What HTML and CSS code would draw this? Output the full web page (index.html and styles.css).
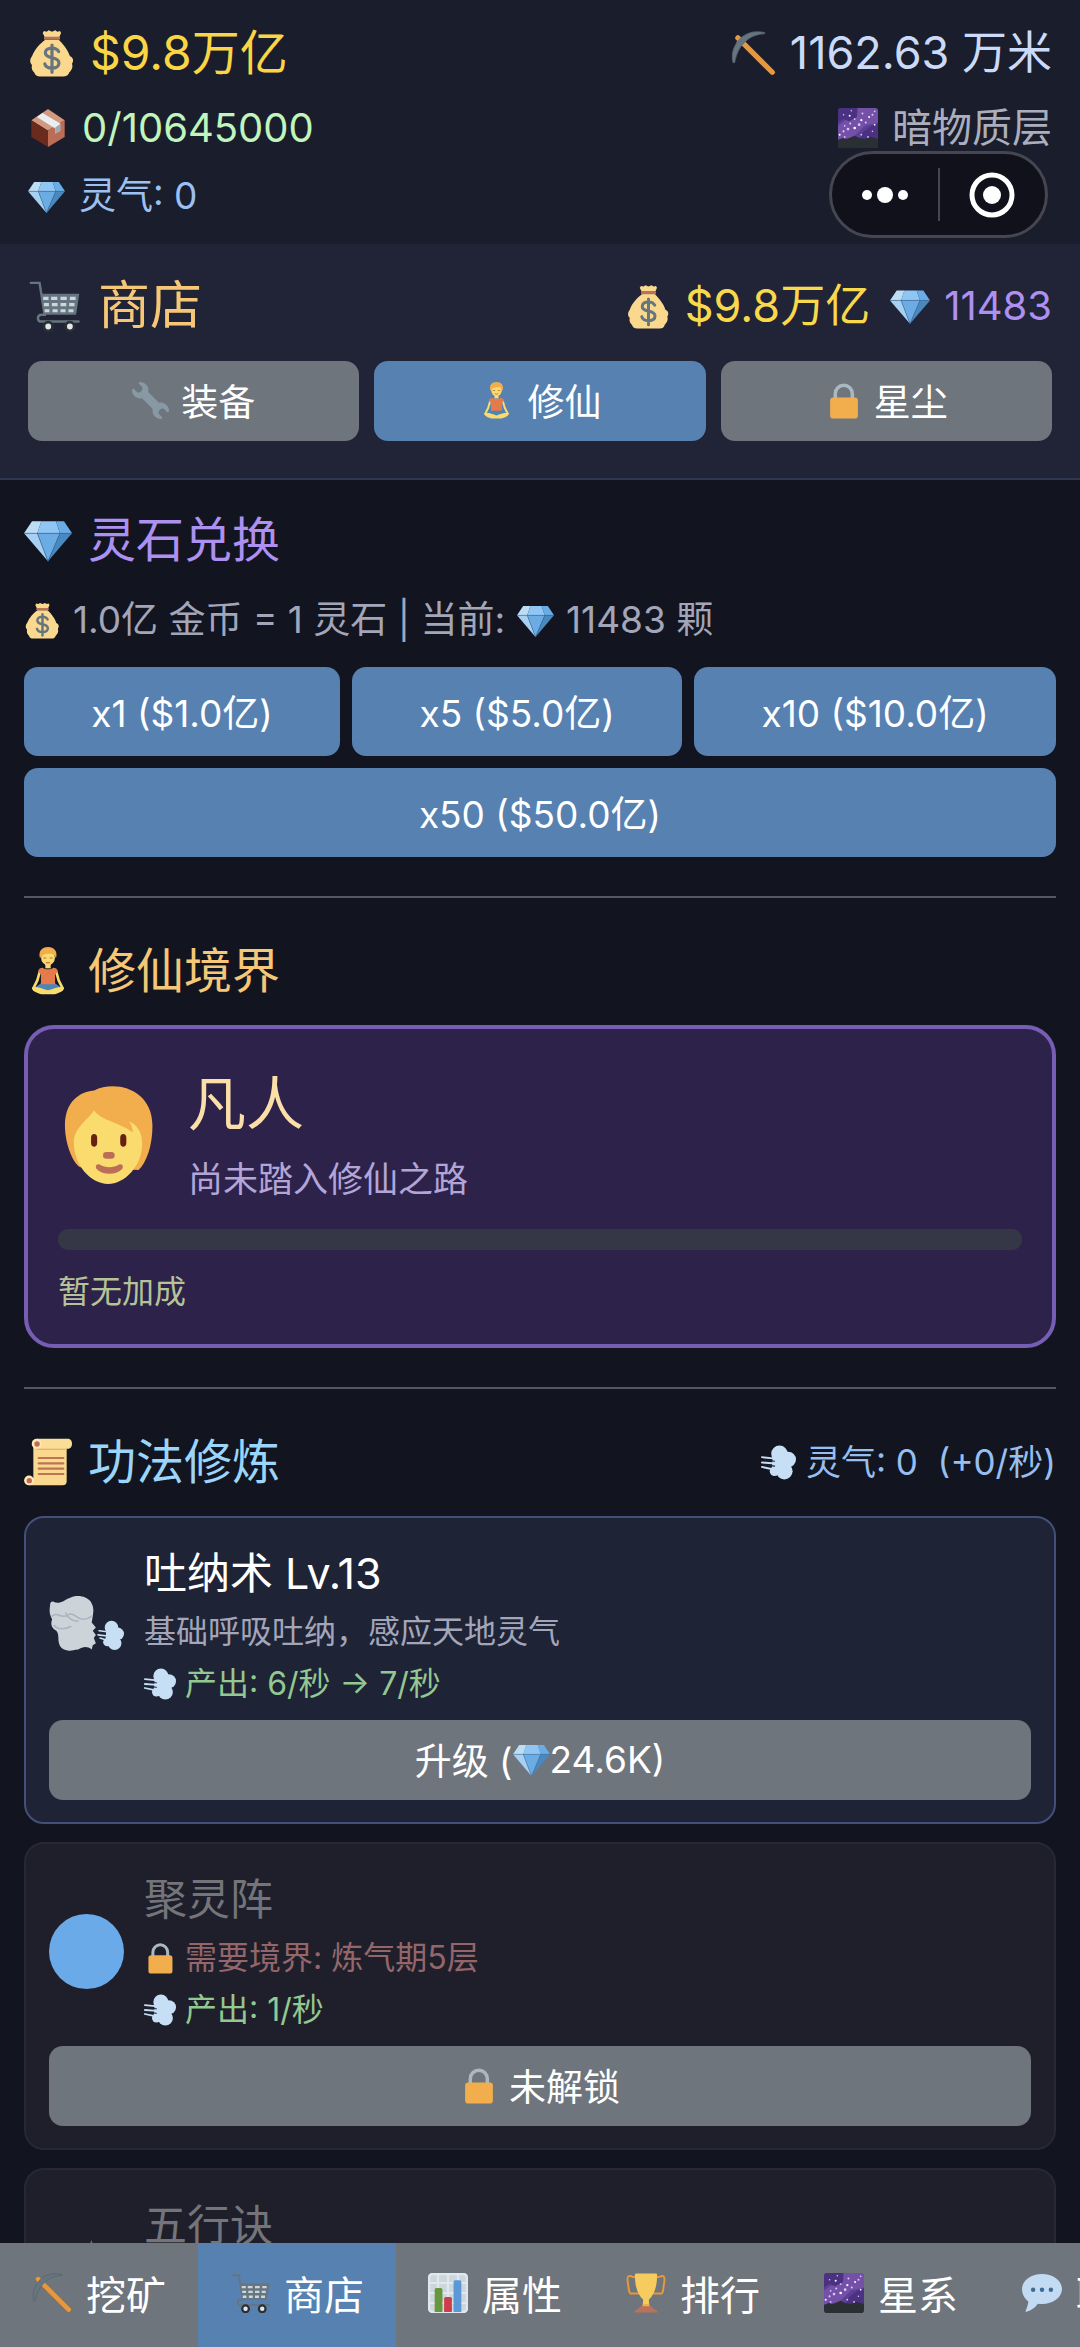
FILE: index.html
```html
<!DOCTYPE html>
<html lang="zh-CN">
<head>
  <meta charset="UTF-8" />
  <meta name="viewport" content="width=device-width, initial-scale=1.0" />
  <title>商店</title>
  <link rel="stylesheet" href="styles.css">
</head>
<body>
  <!-- Icon sprite -->
  <svg class="sprite" aria-hidden="true">
    <symbol id="i-bag" viewBox="0 0 36 36">
      <path fill="#fad98f" d="M12 1.5l2 .5 1.500-1 2.500 1 2.500-1L22 2l2-.5.8 1.500L23.500 6h-11L11 3z"/>
      <path fill="#fad98f" d="M13 8h10c3 3 7 7.500 8.500 12.500C34 21.500 34.500 24 33 26c1 3-.5 5-2 6.500-.6 2-1.800 3.100-4 3.100H9c-2.200 0-3.600-.8-4.200-2.800C3 31 2.400 29.500 3 27c-2-2-1.500-4.500 0-6.500C5 15 9 11 13 8z"/>
      <path fill="#b8735a" d="M12.500 5.800h11c.8 0 .8 2.300 0 2.300h-11c-.8 0-.8-2.300 0-2.300z"/>
      <path fill="none" stroke="#67757f" stroke-width="2.400" stroke-linecap="round" stroke-linejoin="round" d="M23 17c-1-2.200-3-2.700-5-2.700-3 0-5 1.300-5 3.600 0 2.500 2.500 3.200 5 3.700 2.800.6 5.200 1.300 5.200 4 0 2.400-2.200 3.700-5.200 3.700-2.600 0-4.800-.8-5.400-3.200M18 12v20.500"/>
    </symbol>
    <symbol id="i-box" viewBox="0 0 36 36">
      <path fill="#d3997f" d="M18 1l15 10-15 9.500L3 11z"/>
      <path fill="#6a2a1e" d="M3 11l15 9.500V35L3 26z"/>
      <path fill="#bb6d56" d="M33 11l-15 9.500V35l15-9z"/>
      <path fill="#e8eef2" d="M13 4.500L8 8l16.500 10.500v4.500l4.500-2.500V14z"/>
      <path fill="#99aab5" d="M24.500 17.500L29 14.500v6l-4.500 2.500z"/>
    </symbol>
    <symbol id="i-gem" viewBox="0 0 36 36">
      <path fill="#bdddf4" d="M6 4h7l-3 9H0z"/>
      <path fill="#8fc6f4" d="M13 4h11l3 9H10z"/>
      <path fill="#69ade6" d="M24 4h6l6 9h-9z"/>
      <path fill="#a8d0f2" d="M0 13h10l8 21z"/>
      <path fill="#6cace4" d="M10 13h17l-9 21z"/>
      <path fill="#4a88c0" d="M27 13h9L18 34z"/>
      <path fill="none" stroke="#3b6d99" stroke-width=".5" d="M0 13h36M10 13l8 21 9-21"/>
    </symbol>
    <symbol id="i-pick" viewBox="0 0 36 36">
      <path fill="none" stroke="#e8973a" stroke-width="4.200" stroke-linecap="round" d="M5.500 5.500L33 33"/>
      <path fill="#66757f" stroke="#56626b" stroke-width=".6" d="M1.500 25C-1.500 13 9-3 27 1.200c.6.400.3 1-.5 1C15 3 6 10 3 25c-.2.700-1.200.7-1.500 0z"/>
      <path fill="#66757f" d="M4 9l6-5 3 3-6 6z"/>
    </symbol>
    <symbol id="i-galaxy" viewBox="0 0 36 36">
      <rect width="36" height="36" rx="3" fill="#5c3f97"/>
      <path fill="#7450a8" d="M18 0h15a3 3 0 0 1 3 3v10L24 16 12 28H0V16l8-6 9-2z"/>
      <path fill="#4a3181" d="M0 3a3 3 0 0 1 3-3h14v8l-7 4-5-2-5 3zM22 22l8-6 6-2v14H20z"/>
      <path fill="#292f33" d="M0 29l4-2 3 1 3-1 5-2 4 2 5 1 5-2 4 1 3 1v5a3 3 0 0 1-3 3H3a3 3 0 0 1-3-3z"/>
      <g fill="#fff">
        <circle cx="15" cy="18" r="1.200"/><circle cx="21" cy="11" r="1"/><circle cx="28" cy="8" r=".9"/><circle cx="10.500" cy="7" r=".9"/><circle cx="1.500" cy="24" r=".9"/><circle cx="33" cy="15" r=".8"/>
      </g>
      <g fill="#dcc8f6">
        <circle cx="19" cy="15" r="1.200"/><circle cx="9" cy="19" r="1.200"/><circle cx="5" cy="21" r="1"/><circle cx="11" cy="14" r=".9"/><circle cx="15" cy="10" r=".8"/><circle cx="22" cy="5" r=".9"/><circle cx="31" cy="6" r=".9"/><circle cx="33" cy="3" r=".8"/><circle cx="25" cy="13" r=".9"/><circle cx="12" cy="2.500" r=".7"/><circle cx="5" cy="6" r=".7"/><circle cx="21" cy="24" r=".8"/><circle cx="31" cy="21" r=".7"/><circle cx="27" cy="26" r=".8"/><circle cx="6" cy="26" r=".8"/><circle cx="6" cy="16" r=".8"/>
      </g>
    </symbol>
    <symbol id="i-cart" viewBox="0 0 36 36">
      <path fill="none" stroke="#66757f" stroke-width="1.700" stroke-linecap="round" d="M2 2h6l3.500 22H9.500c-3.500 0-3.500 4.800 0 4.800H35"/>
      <path fill="#66757f" d="M9 9.500h26.500L33.300 24H11z"/>
      <path stroke="#ccd6dd" stroke-width="2.200" d="M10.500 12.700h3.700M16 12.700h4.300M22.500 12.700h4.300M29 12.700h4M11 17h3.500M16.500 17h4M22.500 17h4M28.500 17h3.700M11.500 21.300h3.300M17 21.300h3.500M22.500 21.300h3.500M28 21.300h3.500"/>
      <g fill="#e1e8ed" stroke="#292f33" stroke-width="2"><circle cx="14" cy="32.200" r="3"/><circle cx="29" cy="32.200" r="3"/></g>
    </symbol>
    <symbol id="i-wrench" viewBox="0 0 36 36">
      <path fill="#8899a6" d="M27.989 19.977c-.622 0-1.225.078-1.806.213L15.811 9.818c.134-.581.212-1.184.212-1.806C16.023 3.587 12.436 0 8.012 0 7.110 0 5.910.916 6.909 1.915l2.997 2.997s.999 1.998-.999 3.995-3.996.998-3.996.998L1.915 6.908C.916 5.909 0 7.105 0 8.012c0 4.425 3.587 8.012 8.012 8.012.622 0 1.225-.078 1.806-.212l10.371 10.371c-.135.581-.213 1.184-.213 1.806 0 4.425 3.588 8.011 8.012 8.011.901 0 2.101-.916 1.102-1.915l-2.997-2.997s-.999-1.998.999-3.995 3.995-.999 3.995-.999l2.997 2.997c1 .999 1.916-.196 1.916-1.102 0-4.425-3.587-8.012-8.011-8.012z"/>
    </symbol>
    <symbol id="i-lotus" viewBox="0 0 36 36">
      <path fill="#fadb6e" d="M16 11h4v5h-4z"/>
      <path fill="none" stroke="#fadb6e" stroke-width="2" stroke-linecap="round" stroke-linejoin="round" d="M12 18l-2 7L7 31M24 18l2 7L29 31"/>
      <path fill="#4b86b8" d="M13 27h10l5 3.500-5 2.500H13l-5-2.500z"/>
      <path fill="#fadb6e" d="M6.500 30c4-.5 8 1.500 11.500 2.500 3.500-1 7.500-3 11.500-2.500 1.500 3-3 4.300-6.500 5.500H13c-3.500-1.200-8-2.500-6.500-5.500z"/>
      <path fill="#e57a4a" d="M14 15.500c2 1.500 6 1.500 8 0 2 0 3.300 1 3.300 3l-2 2V28H12.700v-7.500l-2-2c0-2 1.300-3 3.300-3z"/>
      <ellipse cx="18" cy="7.800" rx="5.200" ry="6" fill="#fadb6e"/>
      <path fill="#f2ae4d" d="M12 8.500C10.500 3 13.500 0 18 0s7.500 3 6 8.500c-1-3-2-3.500-4.500-3.500S13.500 5 12 8.500z"/>
      <path fill="none" stroke="#c1694f" stroke-width=".8" d="M14.500 8.300h2.200M19.300 8.300h2.200M16.300 11.300q1.700 1.200 3.400 0"/>
    </symbol>
    <symbol id="i-lock" viewBox="0 0 36 36">
      <path fill="none" stroke="#aab8c2" stroke-width="3.400" d="M10 17v-5.500a8.300 8.300 0 0 1 16.600 0V17"/>
      <rect x="5" y="15" width="27" height="20.500" rx="3" fill="#f2ae4d"/>
    </symbol>
    <symbol id="i-face" viewBox="0 0 36 36">
      <path fill="#f2ae4d" d="M13 2.300C21-1.500 34 2 34 15c0 7-2 13-5 16L8 30c-3-2-5.500-9-5.500-15C2.500 8 6 3 13 2.300z"/>
      <path fill="#fadb6e" d="M13 9.500c3 4 9 4 14 8-.2-1.800-.6-3-1.500-4 3 1 4.800 4 4.800 8C30.300 29.500 24 36 18 36S5.700 29.500 5.700 21c0-5 4.300-7.500 7.300-11.500z"/>
      <path fill="#662113" d="M13 18c.7 0 1.100.6 1.100 1.400v1.800c0 1.800-2.200 1.800-2.200 0v-1.800c0-.8.4-1.400 1.100-1.400zM23.500 18c.7 0 1.100.6 1.100 1.400v1.800c0 1.800-2.200 1.800-2.200 0v-1.800c0-.8.4-1.400 1.100-1.400z"/>
      <rect x="16.200" y="24.500" width="4.200" height="2.400" rx="1.200" fill="#bb6d56"/>
      <path fill="#bb6d56" d="M15 29c2 1.300 5 1.300 7 0 1.200-.5 1.800.8 1 1.700-2.200 2.200-6.800 2.200-9 0-.8-.9-.2-2.200 1-1.700z"/>
    </symbol>
    <symbol id="i-scroll" viewBox="0 0 36 36">
      <path fill="#fad98f" d="M7 3h25v29.500a3 3 0 0 1-3 3H4V30h3z"/>
      <path fill="#fadd98" d="M9.500.5H33c4 0 4 7.500 0 7.500H9.500z"/>
      <path fill="#e8b46a" d="M9 8h23v1H9z"/>
      <circle cx="9.500" cy="4.300" r="3.700" fill="#ffe8b6"/><circle cx="9.800" cy="4.500" r="2" fill="#bb6d56"/>
      <circle cx="3.800" cy="31.800" r="3.700" fill="#ffe8b6"/><circle cx="4" cy="32" r="2" fill="#bb6d56"/>
      <path stroke="#bb7555" stroke-width="1.600" stroke-linecap="round" d="M11 15h18.500M11 19h18.500M11 23h18.500M11 27h18.500"/>
    </symbol>
    <symbol id="i-wind" viewBox="0 0 36 36">
      <g fill="#c6dff5"><circle cx="19" cy="9" r="8.500"/><circle cx="28" cy="15" r="8"/><circle cx="24" cy="27" r="8.500"/><circle cx="14" cy="27" r="5"/><path d="M12 12h18v16H11z"/></g>
      <path fill="none" stroke="#c6dff5" stroke-width="2" stroke-linecap="round" d="M1 12.500l14 1.500M1 18l14 1M1 22.500L12 25"/>
      <path fill="none" stroke="#1f2336" stroke-width="1.100" stroke-linecap="round" d="M4 15.500l10 1.200M4 20.500l10 1.200"/>
    </symbol>
    <symbol id="i-breath" viewBox="0 0 72 72">
      <path fill="#ccd4da" d="M1 17c0-4 2-5 5-3 6 1 9-3 15-5 7-3 15-1 19 4 3 5 3 9 2 14l-1 6 4 5-3 3 3 4-2 3 2 5-3 2-1 4c-5-4-9-2-13 0-5 0-6 2-10 1-6-1-9-4-9-12 0-4-1-6-2-7-4-2-6-6-4-11-2-4-3-7-2-13z"/>
      <path fill="none" stroke="#aab5bd" stroke-width="1.500" stroke-linecap="round" d="M3 27c5-5 8 3 15-1 4-3 7 1 11 3s8 1 12-2M5 36c4 5 12 3 16 1M16 24c2 5 7 8 12 8"/>
      <g fill="#c6dff5"><circle cx="60" cy="38" r="6.500"/><circle cx="66" cy="44" r="6"/><circle cx="63" cy="53" r="6.500"/><circle cx="56" cy="52" r="4"/><path d="M55 40h12v12H54z"/></g>
      <path stroke="#c6dff5" stroke-width="1.500" stroke-linecap="round" d="M48 41l8 1M47 45l9 1M49 48l6 2"/>
    </symbol>
    <symbol id="i-orb" viewBox="0 0 72 72"><circle cx="36" cy="36" r="36" fill="#6aaae8"/></symbol>
    <symbol id="i-element" viewBox="0 0 72 72"><path fill="#6c6c70" d="M41 0l6 25 23 9-24 7-10 29-9-28-25-8 26-9z"/></symbol>
    <symbol id="i-chart" viewBox="0 0 36 36">
      <rect width="36" height="36" rx="4" fill="#ccd6dd"/>
      <path stroke="#e1e8ed" stroke-width="2" d="M9 0v36M18 0v36M27 0v36M0 9h36M0 18h36M0 27h36"/>
      <rect x="1" y="1" width="34" height="34" rx="3" fill="none" stroke="#e1e8ed" stroke-width="2"/>
      <path fill="#68963f" d="M6 35V15q0-1.500 1.500-1.500h4q1.500 0 1.500 1.500v20z"/>
      <path fill="#cf3d4c" d="M14.500 35V23q0-1.500 1.500-1.500h4q1.500 0 1.500 1.500v12z"/>
      <path fill="#5b98d8" d="M23 35V8q0-1.500 1.500-1.500h4Q30 6.500 30 8v27z"/>
    </symbol>
    <symbol id="i-trophy" viewBox="0 0 36 36">
      <path fill="none" stroke="#e8973a" stroke-width="1.800" d="M10 3.500H6q-5.500-2.500-4.500 4l1.300 9q.6 2.500 3 2h6M26 3.500h4q5.500-2.500 4.500 4l-1.300 9q-.6 2.500-3 2h-6"/>
      <path fill="#f2ae4d" d="M16 22h4l1.500 9h-7z"/>
      <path fill="#f7cc5e" d="M8 1.500Q8 .5 9.500.5h17q1.500 0 1.500 1C28 13 25 20 20.500 24v4h-5v-4C11 20 8 13 8 1.500z"/>
      <path fill="#b8735a" d="M13 30h10q1 2 3.500 3 2 .6 2 2.500h-21q0-1.900 2-2.500Q12 32 13 30z"/>
    </symbol>
    <symbol id="i-bubble" viewBox="0 0 36 36">
      <path fill="#c2dbf2" d="M18 1c9.900 0 18 6 18 13.500S28 28 18 28c-1.300 0-2.500-.1-3.700-.3C12 31 8 34 3.500 35c-.8-.5 1.700-4 2.200-9.300C2.200 23 0 19 0 14.500 0 7 8.100 1 18 1z"/>
      <g fill="#3f6a96"><circle cx="10" cy="15" r="2"/><circle cx="18" cy="15" r="2"/><circle cx="26" cy="15" r="2"/></g>
    </symbol>
  </svg>

  <div class="app">
    <!-- Status header -->
    <header class="status">
      <div class="status-row">
        <span class="stat stat-money"><svg class="icon"><use href="#i-bag"/></svg>$9.8万亿</span>
        <span class="stat stat-depth"><svg class="icon"><use href="#i-pick"/></svg>1162.63 万米</span>
      </div>
      <div class="status-row status-row-mid">
        <span class="stat stat-cargo"><svg class="icon"><use href="#i-box"/></svg>0/10645000</span>
        <span class="stat stat-layer"><svg class="icon"><use href="#i-galaxy"/></svg>暗物质层</span>
      </div>
      <div class="status-row status-row-low">
        <span class="stat stat-qi"><svg class="icon"><use href="#i-gem"/></svg>灵气: 0</span>
      </div>
      <div class="capsule">
        <button class="capsule-btn" aria-label="更多">
          <svg width="50" height="50" viewBox="0 0 50 50" fill="#fff"><circle cx="7" cy="25" r="5"/><circle cx="25" cy="25" r="8"/><circle cx="43" cy="25" r="5"/></svg>
        </button>
        <button class="capsule-btn" aria-label="关闭">
          <svg width="50" height="50" viewBox="0 0 50 50" fill="#fff"><circle cx="25" cy="25" r="20" fill="none" stroke="#fff" stroke-width="5"/><circle cx="25" cy="25" r="9"/></svg>
        </button>
      </div>
    </header>

    <!-- Shop header -->
    <section class="shop-head">
      <div class="shop-bar">
        <h1 class="shop-title"><svg class="icon"><use href="#i-cart"/></svg>商店</h1>
        <div class="wallet">
          <span class="wallet-money"><svg class="icon"><use href="#i-bag"/></svg>$9.8万亿</span>
          <span class="wallet-stone"><svg class="icon"><use href="#i-gem"/></svg>11483</span>
        </div>
      </div>
      <div class="tabs">
        <button class="btn btn-gray"><svg class="icon"><use href="#i-wrench"/></svg>装备</button>
        <button class="btn"><svg class="icon"><use href="#i-lotus"/></svg>修仙</button>
        <button class="btn btn-gray"><svg class="icon"><use href="#i-lock"/></svg>星尘</button>
      </div>
    </section>

    <main class="content">
      <!-- Stone exchange -->
      <section class="section">
        <h2 class="title title-purple"><svg class="icon"><use href="#i-gem"/></svg>灵石兑换</h2>
        <p class="rate"><svg class="icon"><use href="#i-bag"/></svg>1.0亿 金币 = 1 灵石 | 当前: <svg class="icon"><use href="#i-gem"/></svg>11483 颗</p>
        <div class="exchange">
          <button class="btn">x1 ($1.0亿)</button>
          <button class="btn">x5 ($5.0亿)</button>
          <button class="btn">x10 ($10.0亿)</button>
          <button class="btn">x50 ($50.0亿)</button>
        </div>
      </section>

      <!-- Realm -->
      <section class="section">
        <h2 class="title title-gold"><svg class="icon"><use href="#i-lotus"/></svg>修仙境界</h2>
        <div class="realm">
          <div class="realm-top">
            <svg class="realm-face"><use href="#i-face"/></svg>
            <div>
              <div class="realm-name">凡人</div>
              <div class="realm-desc">尚未踏入修仙之路</div>
            </div>
          </div>
          <div class="realm-bar"></div>
          <div class="realm-bonus">暂无加成</div>
        </div>
      </section>

      <!-- Skills -->
      <section class="section">
        <div class="section-head">
          <h2 class="title title-blue"><svg class="icon"><use href="#i-scroll"/></svg>功法修炼</h2>
          <span class="qi-rate"><svg class="icon"><use href="#i-wind"/></svg>灵气: 0&nbsp; (+0/秒)</span>
        </div>
        <div class="skills">
          <article class="skill">
            <div class="skill-top">
              <svg class="skill-icon"><use href="#i-breath"/></svg>
              <div>
                <h3 class="skill-name">吐纳术 Lv.13</h3>
                <p class="skill-line">基础呼吸吐纳，感应天地灵气</p>
                <p class="skill-line skill-output"><svg class="icon"><use href="#i-wind"/></svg>产出: 6/秒 → 7/秒</p>
              </div>
            </div>
            <button class="btn btn-gray skill-btn"><span>升级 (</span><svg class="icon"><use href="#i-gem"/></svg><span>24.6K)</span></button>
          </article>
          <article class="skill skill-locked">
            <div class="skill-top">
              <svg class="skill-icon"><use href="#i-orb"/></svg>
              <div>
                <h3 class="skill-name">聚灵阵</h3>
                <p class="skill-line skill-need"><svg class="icon"><use href="#i-lock"/></svg>需要境界: 炼气期5层</p>
                <p class="skill-line skill-output"><svg class="icon"><use href="#i-wind"/></svg>产出: 1/秒</p>
              </div>
            </div>
            <button class="btn btn-gray"><svg class="icon"><use href="#i-lock"/></svg>未解锁</button>
          </article>
          <article class="skill skill-locked">
            <div class="skill-top">
              <svg class="skill-icon"><use href="#i-element"/></svg>
              <div>
                <h3 class="skill-name">五行诀</h3>
                <p class="skill-line skill-need"></p>
                <p class="skill-line skill-output"></p>
              </div>
            </div>
          </article>
        </div>
      </section>
    </main>

    <!-- Bottom navigation -->
    <nav class="nav">
      <button class="nav-item"><svg class="icon"><use href="#i-pick"/></svg>挖矿</button>
      <button class="nav-item nav-active"><svg class="icon"><use href="#i-cart"/></svg>商店</button>
      <button class="nav-item"><svg class="icon"><use href="#i-chart"/></svg>属性</button>
      <button class="nav-item"><svg class="icon"><use href="#i-trophy"/></svg>排行</button>
      <button class="nav-item"><svg class="icon"><use href="#i-galaxy"/></svg>星系</button>
      <button class="nav-item"><svg class="icon"><use href="#i-bubble"/></svg>聊天</button>
    </nav>
  </div>
</body>
</html>
```
FILE: styles.css
```css
* {
  box-sizing: border-box;
}

body {
  margin: 0;
  background-color: #121520;
  color: #fff;
  font-family: Inter, 'Noto Sans CJK SC', sans-serif;
}

h1, h2, h3, p {
  margin: 0;
  font-weight: 400;
}

button {
  border: none;
  padding: 0;
  color: #fff;
  font-family: inherit;
  cursor: pointer;
}

.sprite {
  display: none;
}

.icon {
  width: 1em;
  height: 1em;
  flex: none;
}

.app {
  display: flex;
  flex-direction: column;
  height: 100vh;
  overflow: hidden;
}

/* status header */
.status {
  position: relative;
  flex: none;
  display: flex;
  flex-direction: column;
  gap: 10px;
  padding: 18px 28px 20px;
  background-color: #1a1d2b;
}

.status-row {
  display: flex;
  justify-content: space-between;
  font-size: 45px;
  line-height: 70px;
}

.status-row-mid {
  font-size: 40px;
  line-height: 60px;
}

.status-row-low {
  font-size: 37px;
  line-height: 56px;
}

.stat {
  display: flex;
  align-items: center;
  gap: 14px;
}

.stat-money {
  color: #fad546;
  font-size: 48px;
}

.stat-depth {
  color: #cbdaf8;
}

.stat-cargo {
  color: #c0f5bd;
}

.stat-layer {
  color: #acaebd;
}

.stat-qi {
  color: #9cc0f2;
}

.capsule {
  position: absolute;
  right: 32px;
  bottom: 6px;
  width: 219px;
  height: 87px;
  display: flex;
  padding: 14px 0;
  border: 3px solid #45464f;
  border-radius: 44px;
  background-color: #10111a;
}

.capsule-btn {
  flex: 1;
  display: flex;
  align-items: center;
  justify-content: center;
  background: none;
}

.capsule-btn + .capsule-btn {
  border-left: 2px solid #45464f;
}

/* shop header */
.shop-head {
  flex: none;
  padding: 27px 28px 37px;
  background-color: #202436;
  border-bottom: 2px solid #2f3650;
}

.shop-bar {
  display: flex;
  justify-content: space-between;
  line-height: 70px;
  margin-bottom: 20px;
}

.shop-title {
  display: flex;
  align-items: center;
  gap: 18px;
  color: #f5c777;
  font-size: 52px;
}

.wallet {
  display: flex;
  gap: 20px;
}

.wallet-money,
.wallet-stone {
  display: flex;
  align-items: center;
  gap: 14px;
}

.wallet-money {
  color: #f8d94c;
  font-size: 45px;
}

.wallet-stone {
  color: #ad90f0;
  font-size: 40px;
}

.tabs {
  display: grid;
  grid-template-columns: repeat(3, 1fr);
  gap: 15px;
}

.btn {
  display: flex;
  align-items: center;
  justify-content: center;
  gap: 12px;
  height: 80px;
  padding-bottom: 2px;
  border-radius: 14px;
  background-color: #5681b1;
  font-size: 37px;
}

.btn-gray {
  background-color: #6f757c;
}

/* content */
.content {
  flex: 1;
  min-height: 0;
  padding: 28px 24px 0;
  overflow: hidden;
}

.section + .section {
  margin-top: 39px;
  padding-top: 41px;
  border-top: 2px solid #555862;
}

.section-head {
  display: flex;
  align-items: flex-start;
  justify-content: space-between;
}

.title {
  display: flex;
  align-items: center;
  gap: 16px;
  margin-bottom: 22px;
  font-size: 48px;
  line-height: 64px;
}

.title-purple {
  color: #ad90f0;
}

.title-gold {
  color: #f5c777;
}

.title-blue {
  color: #9cd5fa;
}

.rate {
  display: flex;
  align-items: center;
  gap: 12px;
  margin-bottom: 21px;
  color: #a3a6b9;
  font-size: 37px;
  line-height: 52px;
}

.exchange {
  display: flex;
  flex-wrap: wrap;
  gap: 12px;
}

.exchange .btn {
  flex: 1 1 auto;
  height: 89px;
  padding: 0 60px 2px;
}

.realm {
  padding: 30px;
  border: 4px solid #755eb3;
  border-radius: 30px;
  background-color: #2d2249;
}

.realm-top {
  display: flex;
  align-items: center;
  gap: 30px;
}

.realm-face {
  width: 100px;
  height: 100px;
}

.realm-name {
  color: #fae0a8;
  font-size: 58px;
  line-height: 90px;
}

.realm-desc {
  color: #b3a5d8;
  font-size: 35px;
  line-height: 60px;
}

.realm-bar {
  height: 21px;
  margin: 20px 0;
  border-radius: 10px;
  background-color: #353746;
}

.realm-bonus {
  color: #b6c298;
  font-size: 32px;
  line-height: 44px;
}

.qi-rate {
  display: flex;
  align-items: center;
  gap: 10px;
  color: #96bff0;
  font-size: 35px;
  line-height: 64px;
}

.skills {
  display: flex;
  flex-direction: column;
  gap: 18px;
}

.skill {
  padding: 22px 23px;
  border: 2px solid #42507a;
  border-radius: 20px;
  background-color: #1f2336;
}

.skill-top {
  display: flex;
  align-items: center;
  gap: 20px;
  margin-bottom: 10px;
}

.skill-icon {
  width: 75px;
  height: 75px;
}

.skill-name {
  font-size: 43px;
  line-height: 66px;
}

.skill-line {
  display: flex;
  align-items: center;
  gap: 9px;
  min-height: 52px;
  color: #a3a6b9;
  font-size: 32px;
  line-height: 52px;
}

.skill-output {
  color: #93c890;
}

.skill .btn {
  width: 100%;
}

.skill-btn {
  gap: 0;
}

.skill-locked {
  border-color: #272834;
  background-color: #1f1f2b;
}

.skill-locked .skill-name {
  color: #74757a;
}

.skill-need {
  color: #94666a;
}

/* bottom navigation */
.nav {
  flex: none;
  display: flex;
  height: 104px;
  overflow: hidden;
  background-color: #6f757c;
}

.nav-item {
  flex: none;
  display: flex;
  align-items: center;
  gap: 14px;
  padding: 0 32px 4px;
  background: none;
  font-size: 40px;
}

.nav-active {
  background-color: #5681b1;
}
```
